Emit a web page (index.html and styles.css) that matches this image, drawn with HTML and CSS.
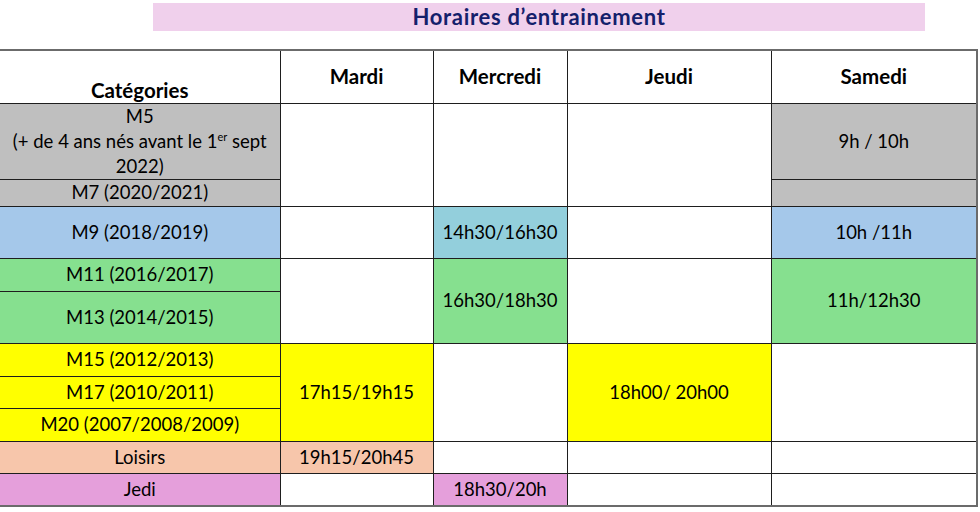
FILE: index.html
```html
<!DOCTYPE html>
<html lang="fr">
<head>
<meta charset="utf-8">
<title>Horaires d'entrainement</title>
<link rel="stylesheet" href="styles.css">
</head>
<body>
<div class="title-row">
  <h1 class="title">Horaires d’entrainement</h1>
</div>
<table class="schedule">
  <colgroup>
    <col class="c-cat">
    <col class="c-mardi">
    <col class="c-mercredi">
    <col class="c-jeudi">
    <col class="c-samedi">
  </colgroup>
  <tr class="r-head">
    <th class="head-cat">Catégories</th>
    <th>Mardi</th>
    <th>Mercredi</th>
    <th>Jeudi</th>
    <th>Samedi</th>
  </tr>
  <tr class="r-m5">
    <td class="gray">M5<br>(+ de 4 ans nés avant le 1<sup>er</sup> sept<br>2022)</td>
    <td rowspan="2"></td>
    <td rowspan="2"></td>
    <td rowspan="2"></td>
    <td class="gray no-bottom">9h / 10h</td>
  </tr>
  <tr class="r-m7">
    <td class="gray">M7 (2020/2021)</td>
    <td class="gray no-top"></td>
  </tr>
  <tr class="r-m9">
    <td class="blue">M9 (2018/2019)</td>
    <td></td>
    <td class="teal">14h30/16h30</td>
    <td></td>
    <td class="blue">10h /11h</td>
  </tr>
  <tr class="r-m11">
    <td class="green">M11 (2016/2017)</td>
    <td rowspan="2"></td>
    <td rowspan="2" class="green">16h30/18h30</td>
    <td rowspan="2"></td>
    <td rowspan="2" class="green">11h/12h30</td>
  </tr>
  <tr class="r-m13">
    <td class="green">M13 (2014/2015)</td>
  </tr>
  <tr class="r-m15">
    <td class="yellow">M15 (2012/2013)</td>
    <td rowspan="3" class="yellow">17h15/19h15</td>
    <td rowspan="3"></td>
    <td rowspan="3" class="yellow">18h00/ 20h00</td>
    <td rowspan="3"></td>
  </tr>
  <tr class="r-m17">
    <td class="yellow">M17 (2010/2011)</td>
  </tr>
  <tr class="r-m20">
    <td class="yellow">M20 (2007/2008/2009)</td>
  </tr>
  <tr class="r-loisirs">
    <td class="peach">Loisirs</td>
    <td class="peach">19h15/20h45</td>
    <td></td>
    <td></td>
    <td></td>
  </tr>
  <tr class="r-jedi">
    <td class="pink">Jedi</td>
    <td></td>
    <td class="pink">18h30/20h</td>
    <td></td>
    <td></td>
  </tr>
</table>
</body>
</html>
```

FILE: styles.css
```css
html, body {
  margin: 0;
  padding: 0;
  background: #ffffff;
}

body {
  font-family: Lato, "Open Sans", sans-serif;
  color: #000;
}

.title-row {
  padding: 3px 0 0 153px;
  height: 49px;
  box-sizing: border-box;
}

.title {
  margin: 0;
  width: 772px;
  height: 28px;
  background: #f0d0ec;
  color: #14206b;
  font-size: 22px;
  letter-spacing: 0.7px;
  font-weight: 700;
  line-height: 28px;
  text-align: center;
}

.schedule {
  border-collapse: collapse;
  table-layout: fixed;
  width: 977px;
  border-top: 2px solid #6b6b6b;
  border-right: 2px solid #6b6b6b;
  border-bottom: 2px solid #6b6b6b;
}

.c-cat { width: 280px; }
.c-mardi { width: 153px; }
.c-mercredi { width: 134px; }
.c-jeudi { width: 204px; }
.c-samedi { width: 206px; }

.schedule th,
.schedule td {
  border: 1px solid #1e1e1e;
  padding: 0 2px;
  text-align: center;
  vertical-align: middle;
  font-size: 18.5px;
  line-height: 25px;
  white-space: nowrap;
}

.schedule tr > :first-child {
  border-left: none;
}

.schedule th {
  font-weight: 700;
  font-size: 20.5px;
}

.schedule th.head-cat {
  vertical-align: bottom;
  padding-bottom: 0;
}

.schedule sup {
  font-size: 11px;
  line-height: 0;
  vertical-align: 7px;
}

.r-head { height: 53px; }
.r-m5 { height: 76px; }
.r-m7 { height: 27px; }
.r-m9 { height: 52px; }
.r-m11 { height: 33px; }
.r-m13 { height: 52px; }
.r-m15 { height: 33px; }
.r-m17 { height: 32px; }
.r-m20 { height: 33px; }
.r-loisirs { height: 32px; }
.r-jedi { height: 33px; }

.r-m5 td.gray.no-bottom {
  vertical-align: top;
  padding-top: 25px;
}

.no-bottom { border-bottom-color: #bfbfbf; }
.no-top { border-top-color: #bfbfbf; }

.gray { background: #bfbfbf; }
.blue { background: #a5c8ea; }
.teal { background: #93cfdc; }
.green { background: #86e08f; }
.yellow { background: #ffff00; }
.peach { background: #f7c6ab; }
.pink { background: #e59fdb; }
```
